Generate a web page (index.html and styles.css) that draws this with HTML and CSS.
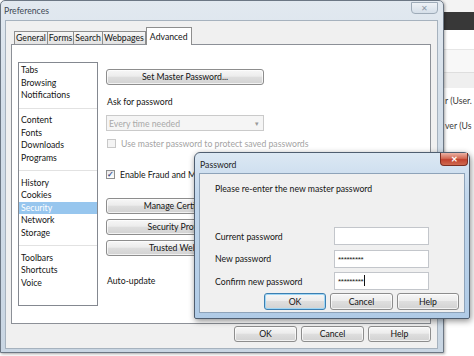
FILE: index.html
```html
<!DOCTYPE html>
<html>
<head>
<meta charset="utf-8">
<title>Preferences</title>
<link rel="stylesheet" href="styles.css">
</head>
<body>
<div class="bgwin">
  <div class="bg-top"></div>
  <div class="bg-bar"></div>
  <div class="bg-row-a"></div>
  <div class="bg-row-b"></div>
  <div class="bg-row-c"></div>
  <div class="bg-text">r (User.</div>
  <div class="bg-text">ver (Us</div>
</div>

<div class="prefs">
  <div class="titlebar">
    <span class="title">Preferences</span>
    <span class="close-inactive">✕</span>
  </div>
  <div class="client">
    <div class="tabs">
      <div class="tab">General</div>
      <div class="tab">Forms</div>
      <div class="tab">Search</div>
      <div class="tab">Webpages</div>
      <div class="tab sel">Advanced</div>
    </div>
    <div class="panel">
      <div class="list">
        <div class="item">Tabs</div>
        <div class="item">Browsing</div>
        <div class="item">Notifications</div>
        <div class="sep"></div>
        <div class="item">Content</div>
        <div class="item">Fonts</div>
        <div class="item">Downloads</div>
        <div class="item">Programs</div>
        <div class="sep"></div>
        <div class="item">History</div>
        <div class="item">Cookies</div>
        <div class="item sel">Security</div>
        <div class="item">Network</div>
        <div class="item">Storage</div>
        <div class="sep"></div>
        <div class="item">Toolbars</div>
        <div class="item">Shortcuts</div>
        <div class="item">Voice</div>
      </div>
      <div class="opts">
        <div class="btn btn-master">Set Master Password...</div>
        <div class="label ask">Ask for password</div>
        <div class="select"><span>Every time needed</span><span class="arrow">▾</span></div>
        <div class="check-row disabled"><span class="cbox"></span><span class="nowrap">Use master password to protect saved passwords</span></div>
        <div class="check-row checked"><span class="cbox">✓</span><span class="nowrap">Enable Fraud and Malware Protection</span></div>
        <div class="btn btn-wide first">Manage Certificates...</div>
        <div class="btn btn-wide">Security Protocols...</div>
        <div class="btn btn-wide">Trusted Websites...</div>
        <div class="label auto">Auto-update</div>
      </div>
    </div>
    <div class="footer">
      <div class="btn fbtn ok">OK</div>
      <div class="btn fbtn">Cancel</div>
      <div class="btn fbtn">Help</div>
    </div>
  </div>
</div>

<div class="pwdlg">
  <div class="dlg-title">Password</div>
  <span class="close-red">✕</span>
  <div class="dlg-client">
    <div class="msg">Please re-enter the new master password</div>
    <div class="field first">
      <span class="flabel">Current password</span>
      <div class="input"></div>
    </div>
    <div class="field">
      <span class="flabel">New password</span>
      <div class="input">*********</div>
    </div>
    <div class="field">
      <span class="flabel">Confirm new password</span>
      <div class="input">*********<span class="caret"></span></div>
    </div>
    <div class="dlg-buttons">
      <div class="btn dbtn focus">OK</div>
      <div class="btn dbtn wide">Cancel</div>
      <div class="btn dbtn">Help</div>
    </div>
  </div>
</div>
</body>
</html>
```

FILE: styles.css
```css
* { box-sizing: border-box; }

body {
  margin: 0;
  width: 474px;
  height: 356px;
  overflow: hidden;
  position: relative;
  background: #ffffff;
  font-family: Lato, "Liberation Sans", sans-serif;
  font-size: 8.7px;
  color: #141414;
}

/* background application window on the right */
.bgwin {
  position: absolute;
  left: 420px;
  top: 0;
  width: 60px;
  height: 356px;
  background: #ffffff;
  display: flex;
  flex-direction: column;
}
.bg-top { height: 12px; background: #f3f3f3; }
.bg-bar { height: 18px; background: #383838; }
.bg-row-a { height: 20px; border-bottom: 1px solid #e6e6e6; }
.bg-row-b { height: 23px; background: #f8f8f8; border-bottom: 1px solid #dedede; }
.bg-row-c { height: 15px; background: #efefef; }
.bg-text {
  height: 25px;
  line-height: 25px;
  padding-left: 25px;
  color: #3a3a3a;
  white-space: nowrap;
}

/* Preferences window */
.prefs {
  position: absolute;
  left: 0;
  top: 0;
  width: 444px;
  height: 353px;
  border: 1px solid #6c7784;
  border-radius: 5px 5px 0 0;
  background: linear-gradient(#e2e9f0, #d3dee9 30%, #c9d6e3);
  display: flex;
  flex-direction: column;
  box-shadow: 1px 1px 3px rgba(0, 0, 0, 0.35);
}
.titlebar {
  height: 19px;
  padding: 3px 0 0 3px;
  position: relative;
  color: #3f4a56;
  line-height: 13px;
}
.close-inactive {
  position: absolute;
  left: 410px;
  top: 1px;
  width: 27px;
  height: 12px;
  border: 1px solid #9eabb8;
  border-radius: 0 0 4px 4px;
  background: linear-gradient(#eef2f6, #d5dfe9);
  color: #8e99a6;
  font-size: 8px;
  line-height: 10px;
  text-align: center;
}
.client {
  flex: 1;
  margin: 0 5px 3px 4px;
  background: #f0f0f0;
  border: 1px solid #a6b2be;
  padding: 6px 6px 0 5px;
  display: flex;
  flex-direction: column;
}
.tabs {
  display: flex;
  align-items: flex-end;
  height: 18px;
  padding-left: 3px;
  margin-bottom: -1px;
  position: relative;
  z-index: 1;
}
.tab {
  height: 13px;
  margin-bottom: 1px;
  border: 1px solid #8e8e8e;
  border-bottom: none;
  background: linear-gradient(#f6f6f6, #e2e2e2);
  padding: 0 1px;
  line-height: 12px;
  margin-right: -1px;
  white-space: nowrap;
}
.tab.sel {
  height: 18px;
  margin-bottom: 0;
  margin-left: 1px;
  background: #ffffff;
  padding: 2px 3px 0;
  line-height: 13px;
}
.panel {
  height: 280px;
  background: #ffffff;
  border: 1px solid #8c9097;
  display: flex;
  gap: 8px;
  padding: 17px 0 0 6px;
}
.list {
  width: 80px;
  height: 244px;
  border: 1px solid #848890;
  padding-top: 1px;
  line-height: 12.5px;
}
.item { padding-left: 2px; white-space: nowrap; }
.item.sel { background: #97c6ee; color: #ffffff; }
.sep { height: 1px; background: #e2e2e2; margin: 6px 0 5.5px; }

.opts {
  width: 158px;
  display: flex;
  flex-direction: column;
}
.btn {
  height: 16px;
  border: 1px solid #8d8d8d;
  border-radius: 3px;
  background: linear-gradient(#f7f7f7 0%, #ececec 45%, #dedede 50%, #d2d2d2 100%);
  box-shadow: inset 0 0 0 1px rgba(255, 255, 255, 0.7);
  text-align: center;
  line-height: 14px;
  white-space: nowrap;
  overflow: hidden;
}
.btn-master { margin-top: 7px; }
.label { height: 13px; line-height: 13px; padding-left: 1px; }
.ask { margin-top: 10px; }
.select {
  margin-top: 7px;
  height: 16px;
  border: 1px solid #cacaca;
  background: #f5f5f5;
  color: #a9a9a9;
  display: flex;
  justify-content: space-between;
  align-items: center;
  padding: 0 4px 0 2px;
}
.arrow { font-size: 7px; color: #9a9a9a; }
.check-row {
  height: 13px;
  display: flex;
  align-items: center;
  gap: 5px;
  white-space: nowrap;
}
.check-row.disabled { margin-top: 6px; padding-left: 1px; color: #a3a3a3; }
.check-row.checked { margin-top: 18px; gap: 5px; }
.cbox {
  width: 9px;
  height: 9px;
  flex: none;
  border: 1px solid #8e8f8f;
  background: linear-gradient(#e9e9ea, #ffffff);
  font-size: 8px;
  line-height: 7px;
  text-align: center;
  color: #3d4f8c;
  font-weight: bold;
}
.disabled .cbox { border-color: #c8c8c8; background: #f4f4f4; }
.nowrap { white-space: nowrap; }
.btn-wide { margin-top: 5px; }
.btn-wide.first { margin-top: 17px; }
.auto { margin-top: 18px; }

.footer {
  display: flex;
  justify-content: flex-end;
  gap: 4px;
  margin-top: 2px;
}
.fbtn { width: 63px; }

/* Password dialog */
.pwdlg {
  position: absolute;
  left: 194px;
  top: 152px;
  width: 276px;
  height: 167px;
  border: 1px solid #4f5e70;
  border-radius: 6px 6px 2px 2px;
  background: linear-gradient(#dce8f3, #c2d7ec 25%, #b0cbe6 100%);
  box-shadow: 1px 2px 6px rgba(0, 0, 0, 0.45);
  display: flex;
  flex-direction: column;
  padding: 0 4px 5px 4px;
  z-index: 5;
}
.dlg-title {
  height: 20px;
  padding: 5px 0 0 1px;
  line-height: 13px;
  color: #1e1e1e;
}
.close-red {
  position: absolute;
  right: 1px;
  top: 0;
  width: 28px;
  height: 13px;
  border: 1px solid #7b2e22;
  border-top: none;
  border-radius: 0 0 4px 4px;
  background: linear-gradient(#ebb1a3, #d26a55 45%, #c2432f 55%, #cf6a50);
  color: #ffffff;
  font-size: 8px;
  font-weight: bold;
  line-height: 12px;
  text-align: center;
}
.dlg-client {
  flex: 1;
  background: #f0f0f0;
  border: 1px solid #8ea3b9;
  padding: 8px 5px 0 15px;
  display: flex;
  flex-direction: column;
}
.msg { height: 13px; line-height: 13px; }
.field {
  display: flex;
  align-items: center;
  height: 18px;
  margin-top: 4.5px;
}
.field.first { margin-top: 32px; }
.flabel { width: 119px; white-space: nowrap; }
.input {
  width: 95px;
  height: 18px;
  border: 1px solid #c3c6cb;
  background: #ffffff;
  font-family: "Liberation Sans", sans-serif;
  font-size: 8px;
  line-height: 18px;
  padding-left: 3px;
  letter-spacing: -0.3px;
  color: #222;
}
.caret {
  display: inline-block;
  width: 1px;
  height: 11px;
  background: #111;
  vertical-align: -2px;
  margin-left: 1px;
}
.dlg-buttons {
  display: flex;
  justify-content: flex-end;
  gap: 4px;
  margin-top: 3px;
}
.dbtn { width: 62px; height: 17px; line-height: 15px; }
.dbtn.wide { width: 63px; }
.dbtn.focus {
  border-color: #3c7fb1;
  box-shadow: inset 0 0 0 1px #9fd6f5;
}
```
